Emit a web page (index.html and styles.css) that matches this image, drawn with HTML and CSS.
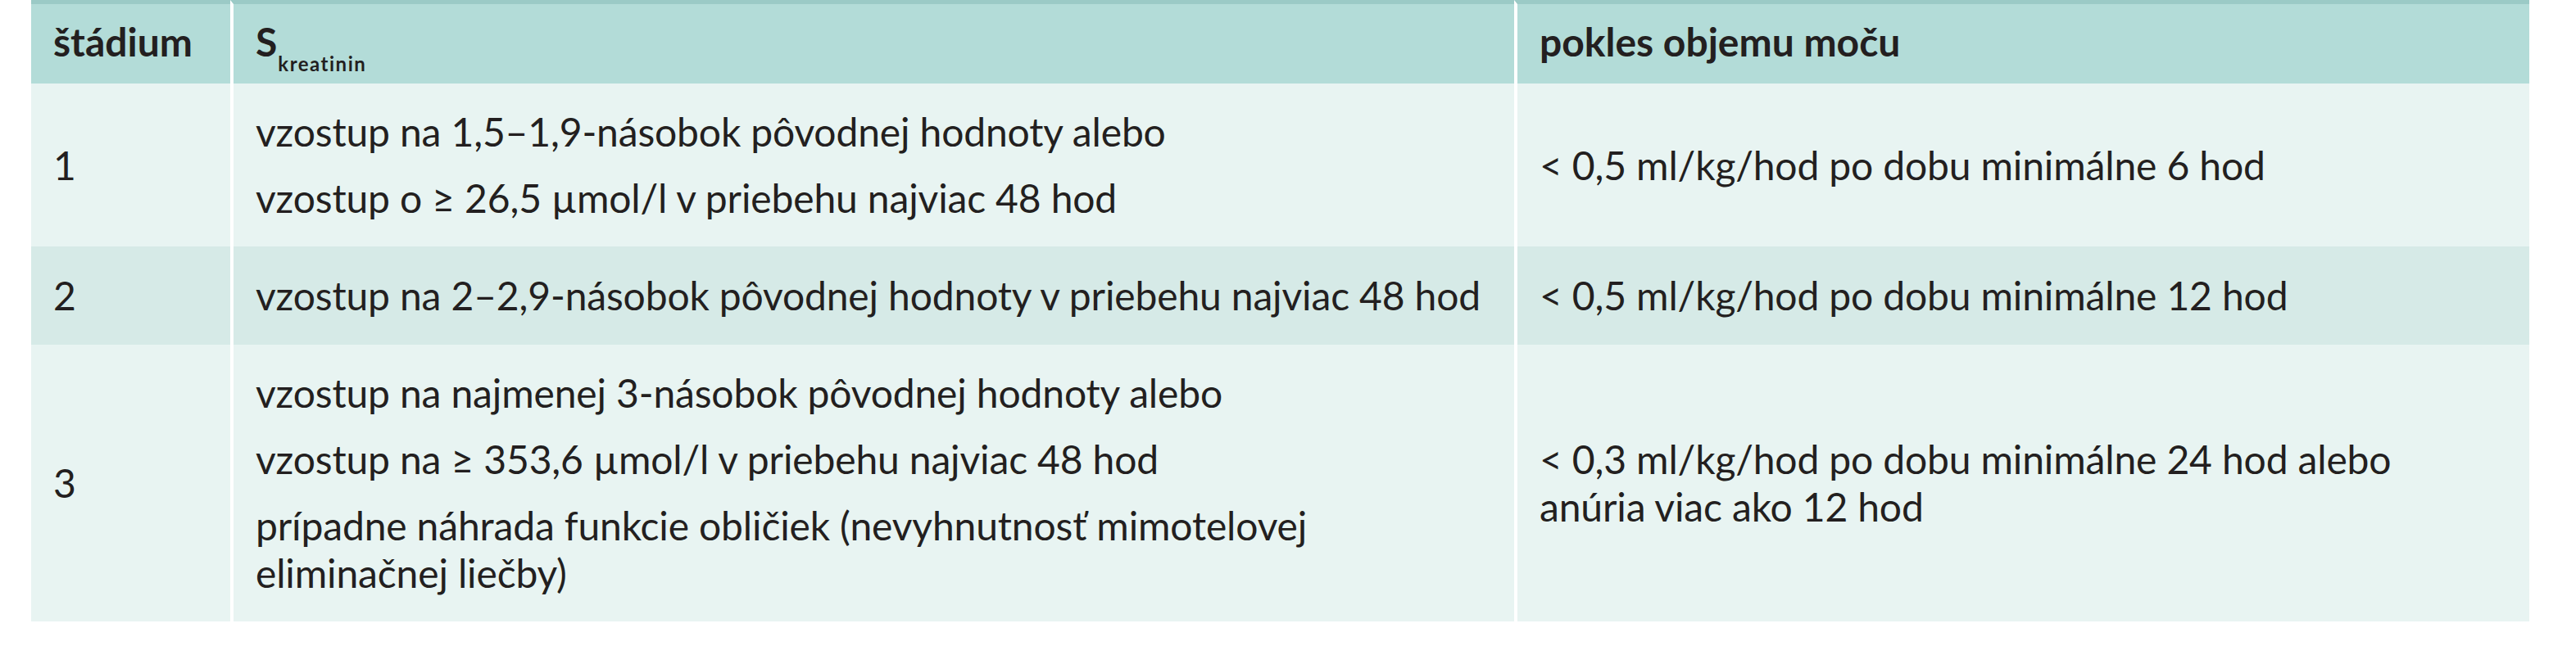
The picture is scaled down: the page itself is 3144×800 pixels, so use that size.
FILE: index.html
```html
<!DOCTYPE html>
<html lang="sk">
<head>
<meta charset="utf-8">
<title>Štádiá AKI</title>
<link rel="stylesheet" href="styles.css">
</head>
<body>
<table class="kdigo">
  <colgroup>
    <col class="c-stage">
    <col class="c-creat">
    <col class="c-urine">
  </colgroup>
  <thead>
    <tr>
      <th>štádium</th>
      <th>S<sub>kreatinin</sub></th>
      <th>pokles objemu moču</th>
    </tr>
  </thead>
  <tbody>
    <tr class="odd">
      <td>1</td>
      <td>
        <p>vzostup na 1,5–1,9-násobok pôvodnej hodnoty alebo</p>
        <p>vzostup o ≥ 26,5 µmol/l v priebehu najviac 48 hod</p>
      </td>
      <td><p>&lt; 0,5 ml/kg/hod po dobu minimálne 6 hod</p></td>
    </tr>
    <tr class="even">
      <td>2</td>
      <td><p>vzostup na 2–2,9-násobok pôvodnej hodnoty v priebehu najviac 48 hod</p></td>
      <td><p>&lt; 0,5 ml/kg/hod po dobu minimálne 12 hod</p></td>
    </tr>
    <tr class="odd">
      <td>3</td>
      <td>
        <p>vzostup na najmenej 3-násobok pôvodnej hodnoty alebo</p>
        <p>vzostup na ≥ 353,6 µmol/l v priebehu najviac 48 hod</p>
        <p>prípadne náhrada funkcie obličiek (nevyhnutnosť mimotelovej<br>eliminačnej liečby)</p>
      </td>
      <td><p>&lt; 0,3 ml/kg/hod po dobu minimálne 24 hod alebo<br>anúria viac ako 12 hod</p></td>
    </tr>
  </tbody>
</table>
</body>
</html>
```
FILE: styles.css
```css
html, body {
  margin: 0;
  padding: 0;
  background: #ffffff;
}

body {
  font-family: Lato, "Open Sans", "Noto Sans", sans-serif;
  color: #231f20;
}

.kdigo {
  margin-left: 38px;
  width: 3049px;
  table-layout: fixed;
  border-collapse: separate;
  border-spacing: 0;
  font-size: 48px;
  line-height: 58px;
}

.c-stage { width: 243px; }
.c-creat { width: 1567px; }
.c-urine { width: 1239px; }

.kdigo th,
.kdigo td {
  text-align: left;
  vertical-align: middle;
  padding: 30px 27px;
}

.kdigo td {
  letter-spacing: -0.15px;
}

.kdigo th + th,
.kdigo td + td {
  border-left: 4px solid #ffffff;
}

.kdigo th {
  background: #b3dcd8;
  border-top: 5px solid #9bcac6;
  font-weight: 700;
  padding-top: 17px;
  padding-bottom: 22px;
}

.kdigo sub {
  font-size: 24px;
  letter-spacing: 1.5px;
  line-height: 0;
  vertical-align: -18px;
  margin-left: 1px;
}

.kdigo p {
  margin: 0;
}

.kdigo p + p {
  margin-top: 23px;
}

.odd td {
  background: #e8f4f2;
}

.even td {
  background: #d6eae7;
  padding-top: 31px;
  padding-bottom: 31px;
}
```
